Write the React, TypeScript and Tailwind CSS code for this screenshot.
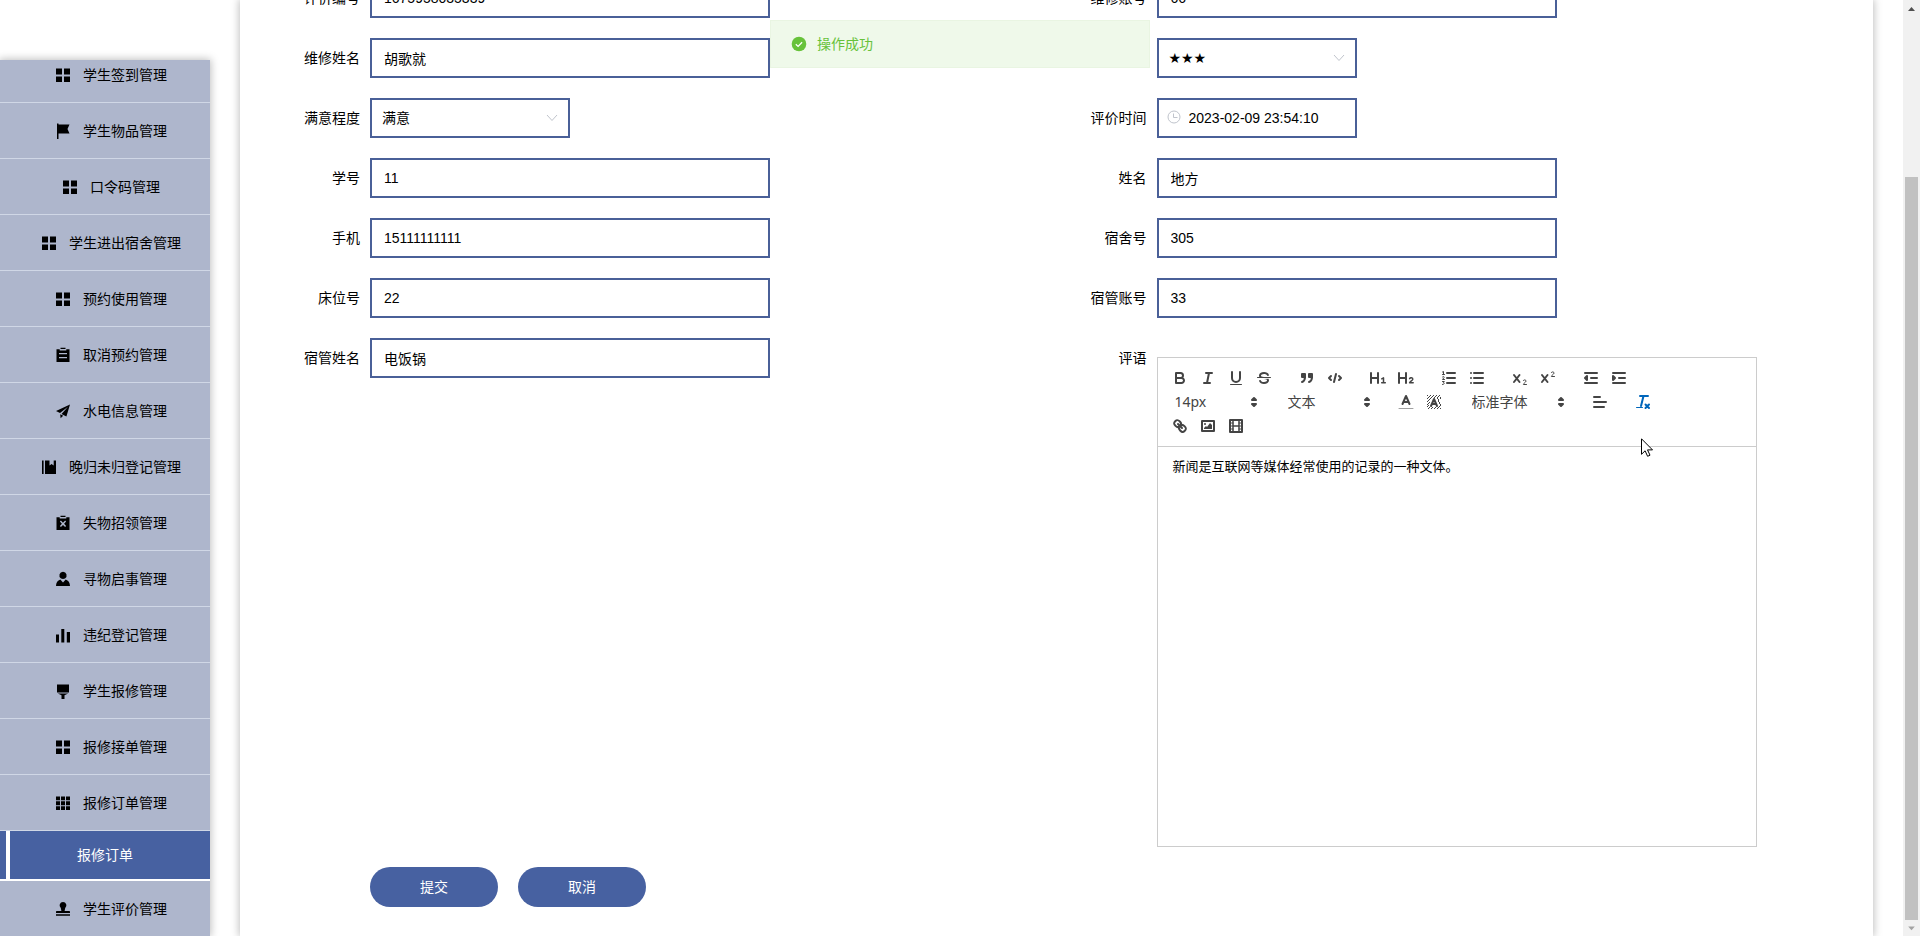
import type { ReactNode } from "react";
import { clsx } from "clsx";

const UI_FONT = "font-['Liberation_Sans','Noto_Sans_CJK_SC',sans-serif]";

const icons: Record<string, ReactNode> = {
  menu: <path d="M1 1.500h6v6H1zM9 1.500h6v6H9zM1 9.500h6v5.500H1zM9 9.500h6v5.500H9z" />,
  flag: <path d="M2 .5h1.500V16H2zM3.500 1.500H14.500L12.500 6l2 4.500h-11z" />,
  order: (
    <path
      fillRule="evenodd"
      d="M5.500.7h5v1.200h-5zM1.500 2.200h3.200v1.200h6.600V2.200h3.200V15h-13zM4 6v1.200h8V6zM4 10v1.200h8V10z"
    />
  ),
  promotion: <path d="M15 1.500 1 8l4 2 8-6.200L6.500 11l4.900 2.400zM5.200 11.300l3 1.500-2.600 2.500z" />,
  management: <path d="M1 1.500h1.600V15H1zM4 1.500h4.500v5L10.600 5l2.100 1.500v-5H15V15H4z" />,
  release: (
    <path
      fillRule="evenodd"
      d="M5.500.7h5v1.200h-5zM1.500 2.200h3.200v1.200h6.600V2.200h3.200V15h-13zM4.900 6.600l2 2.200-2 2.200 1 1L8 9.900l2.100 2.100 1-1-2-2.200 2-2.200-1-1L8 7.700 5.900 5.600z"
    />
  ),
  user: (
    <path d="M8 .8a3.600 3.600 0 0 1 2 6.600L8 8l-2-.6A3.600 3.600 0 0 1 8 .8zM5.300 8.400 8 11.500l2.700-3.100c2.600.8 4.300 3.200 4.300 6.600H1c0-3.400 1.700-5.800 4.300-6.600z" />
  ),
  data: <path d="M1 7.500h3v8H1zM6.300 2h3v13.500h-3zM11.800 5H15v10.500h-3.200z" />,
  platform: <path d="M2 1.500h12v8H2zM2.800 10.500h10.400l-3.700 1.700V16h-3v-3.800z" />,
  grid: (
    <path d="M1 1.500h4v3.800H1zM6 1.500h4v3.800H6zM11 1.500h4v3.800h-4zM1 6.300h4v4H1zM6 6.300h4v4H6zM11 6.300h4v4h-4zM1 11.300h4V15H1zM6 11.300h4V15H6zM11 11.300h4V15h-4z" />
  ),
  check: (
    <path d="M8 1a3.400 3.400 0 0 1 2.200 6L9.600 10H14c.7 0 1 .4 1 1v1H1v-1c0-.6.3-1 1-1h4.400l-.6-3A3.400 3.400 0 0 1 8 1zM1 13.200h14v1.500H1z" />
  ),
};

const menuTop = [
  { icon: "menu", label: "学生签到管理" },
  { icon: "flag", label: "学生物品管理" },
  { icon: "menu", label: "口令码管理" },
  { icon: "menu", label: "学生进出宿舍管理" },
  { icon: "menu", label: "预约使用管理" },
  { icon: "order", label: "取消预约管理" },
  { icon: "promotion", label: "水电信息管理" },
  { icon: "management", label: "晚归未归登记管理" },
  { icon: "release", label: "失物招领管理" },
  { icon: "user", label: "寻物启事管理" },
  { icon: "data", label: "违纪登记管理" },
  { icon: "platform", label: "学生报修管理" },
  { icon: "menu", label: "报修接单管理" },
  { icon: "grid", label: "报修订单管理" },
];

function MenuItem({ icon, label }: { icon: string; label: string }) {
  return (
    <a
      href="#"
      className="flex h-14 shrink-0 items-center justify-center border-b border-[#d0d7e6] text-sm text-black"
    >
      <svg viewBox="0 0 16 16" className="mx-3 h-4 w-4 fill-black">
        {icons[icon]}
      </svg>
      {label}
    </a>
  );
}

function Sidebar() {
  return (
    <aside className="mt-15 w-[210px] shrink-0 overflow-hidden bg-[#aeb6cc] shadow-[0_0_8px_1px_rgba(0,0,0,0.25)]">
      {/* menu is scrolled down a little */}
      <nav className="-mt-[13px] flex flex-col">
        {menuTop.map((item) => (
          <MenuItem key={item.label} {...item} />
        ))}
        <a
          href="#"
          className="flex h-[50px] shrink-0 border-b-2 border-white bg-[#4761a1] pl-1.5 text-sm text-white"
        >
          <span className="w-1 bg-white" />
          <span className="flex flex-1 items-center justify-center pr-2.5">报修订单</span>
        </a>
        <MenuItem icon="check" label="学生评价管理" />
      </nav>
    </aside>
  );
}

const boxClass = "h-10 border-2 border-[#4a6098] bg-white text-sm text-black outline-none";

function Row({ id, label, children }: { id: string; label: string; children: ReactNode }) {
  return (
    <div className="flex items-start">
      <label htmlFor={id} className="w-[100px] shrink-0 pr-2.5 text-right text-sm leading-10 text-black">
        {label}
      </label>
      {children}
    </div>
  );
}

function TextRow({ id, label, value }: { id: string; label: string; value: string }) {
  return (
    <Row id={id} label={label}>
      <input id={id} defaultValue={value} className={clsx(boxClass, "w-[400px] px-3")} />
    </Row>
  );
}

function SelectRow({ id, label, value, className }: { id: string; label: string; value: string; className?: string }) {
  return (
    <Row id={id} label={label}>
      <div className="relative">
        <select id={id} className={clsx(boxClass, "w-[200px] appearance-none px-2.5", className)}>
          <option>{value}</option>
        </select>
        <svg
          viewBox="0 0 12 8"
          className="pointer-events-none absolute top-4 right-3 h-2 w-3 fill-none stroke-[#c0c4cc]"
        >
          <path d="M1 1l5 5.500L11 1" />
        </svg>
      </div>
    </Row>
  );
}

/* ---- editor toolbar ---- */

const tools: Record<string, ReactNode> = {
  bold: (
    <path
      className="fill-none"
      d="M5 4h4.500A2.500 2.500 0 0 1 12 6.500 2.500 2.500 0 0 1 9.500 9H5zM5 9h5.500A2.500 2.500 0 0 1 13 11.500 2.500 2.500 0 0 1 10.500 14H5z"
    />
  ),
  italic: <path d="M7 4h6M5 14h6M8 14l2-10" />,
  underline: (
    <>
      <path className="fill-none" d="M5 3v6a4 4 0 0 0 8 0V3" />
      <rect className="fill-current stroke-none" x="3" y="15" width="12" height="1" rx=".5" />
    </>
  ),
  strike: (
    <>
      <path className="stroke-1" d="M15.500 8.500h-13" />
      <path
        className="fill-current stroke-none"
        d="M9.007 8C6.542 7.791 6 7.519 6 6.500 6 5.792 7.283 5 9 5c1.571 0 2.765.679 2.969 1.309a1 1 0 0 0 1.900-.617C13.356 4.106 11.354 3 9 3 6.200 3 4 4.538 4 6.500a3.200 3.200 0 0 0 .5 1.843zM8.984 10C11.457 10.208 12 10.479 12 11.500c0 .708-1.283 1.500-3 1.500-1.571 0-2.765-.679-2.969-1.309a1 1 0 1 0-1.900.617C4.644 13.894 6.646 15 9 15c2.800 0 5-1.538 5-3.500a3.200 3.200 0 0 0-.5-1.843z"
      />
    </>
  ),
  blockquote: (
    <>
      <path className="fill-current" d="M4 5h3v3H4zM11 5h3v3h-3z" />
      <path className="fill-none" d="M7 8c0 4.031-3 5-3 5M14 8c0 4.031-3 5-3 5" />
    </>
  ),
  code: <path className="fill-none" d="M5 7 3 9l2 2M13 7l2 2-2 2M10 5 8 13" />,
  header1: (
    <>
      <path className="fill-none" d="M2 4v10M9 4v10M2 9h7" />
      <path className="fill-none stroke-[1.500]" d="M12.700 9.800l1.800-1v5M12.700 13.800h3.600" />
    </>
  ),
  header2: (
    <>
      <path className="fill-none" d="M2 4v10M9 4v10M2 9h7" />
      <path className="fill-none stroke-[1.500]" d="M12.600 9.600c.6-1.200 3.300-1 3.200.6-.1 1.400-2.700 1.900-3.200 3.600h3.600" />
    </>
  ),
  ordered: (
    <>
      <path d="M7 4h8M7 9h8M7 14h8" />
      <path
        className="fill-none stroke-1"
        d="M2.500 5.500h2M3.500 5.500v-3L2.500 3M2.500 8c1-1 2-.3 1.500.6L2.500 10.500h2M2.500 12.500h1.800l-.9 1c1.300 0 1.300 2-.9 2"
      />
    </>
  ),
  bullet: <path d="M6 4h9M6 9h9M6 14h9M3 4h0M3 9h0M3 14h0" />,
  sub: (
    <>
      <path d="M3 6l5.500 7M8.500 6L3 13" />
      <path className="fill-none stroke-1" d="M12.300 11.600c.5-1.200 2.900-.9 2.700.6-.2 1.100-2.300 1.700-2.600 3.300h3.100" />
    </>
  ),
  sup: (
    <>
      <path d="M3 6l5.500 7M8.500 6L3 13" />
      <path className="fill-none stroke-1" d="M12.300 3.600c.5-1.200 2.900-.9 2.700.6-.2 1.100-2.300 1.700-2.600 3.300h3.100" />
    </>
  ),
  outdent: (
    <>
      <path d="M3 14h12M3 4h12M9 9h6" />
      <path className="fill-current" d="M5 7v4L3 9z" />
    </>
  ),
  indent: (
    <>
      <path d="M3 14h12M3 4h12M9 9h6" />
      <path className="fill-current" d="M3 7v4l2-2z" />
    </>
  ),
  color: (
    <>
      <path className="stroke-1 opacity-50" d="M2 15.500h14" />
      <path className="fill-none" d="M5.500 11 9 3l3.500 8M11.600 9H6.400" />
    </>
  ),
  background: (
    <>
      <path
        className="stroke-1 [stroke-dasharray:1_2] [stroke-linecap:butt]"
        d="M2 2.500h14M4 3.500h12M3 4.500h13M2 5.500h5M12 5.500h4M4 6.500h2M13 6.500h3M3 7.500h3M13 7.500h3M2 8.500h3M13 8.500h3M4 9.500h1M14 9.500h2M3 10.500h2M14 10.500h2M2 11.500h3M15 11.500h1M3 12.500h1M15 12.500h1M2 13.500h3M14 13.500h2M4 14.500h12M3 15.500h13"
      />
      <path className="fill-none" d="M6 13l3-7L12 13M11 11H7" />
    </>
  ),
  align: <path d="M3 9h12M3 14h10M3 4h6" />,
  clean: (
    <>
      <path d="M6 3h8M7 13 9.500 3M11.500 11.500l3.500 3.500M15 11.500l-3.500 3.500" />
      <rect className="fill-current stroke-none" x="2" y="14" width="7" height="1" rx=".5" />
    </>
  ),
  link: (
    <>
      <path d="M7 7l4 4" />
      <path
        className="fill-none"
        d="M8.900 4.577a3.476 3.476 0 0 1 .36 4.679A3.476 3.476 0 0 1 4.577 8.900C3.185 7.500 2.035 6.400 4.217 4.217S7.500 3.185 8.900 4.577zM13.423 9.100a3.476 3.476 0 0 0-4.679-.36 3.476 3.476 0 0 0 .36 4.679c1.392 1.392 2.500 2.542 4.679.36s1.031-3.279-.36-4.679z"
      />
    </>
  ),
  image: (
    <>
      <rect className="fill-none" x="3" y="4" width="12" height="10" />
      <circle className="fill-current stroke-none" cx="6" cy="7" r="1" />
      <path className="fill-current stroke-none" d="M5 12v-1l2-2 1 1 3-4 2 2v4z" />
    </>
  ),
  video: (
    <>
      <rect className="fill-none" x="3" y="3" width="12" height="12" />
      <path className="fill-none stroke-[1.500]" d="M6 3v12M12 3v12M6 9h6" />
      <path className="stroke-1" d="M3 6h3M3 9h3M3 12h3M12 6h3M12 9h3M12 12h3" />
    </>
  ),
};

function Tool({ name, active }: { name: string; active?: boolean }) {
  return (
    <button
      type="button"
      aria-label={name}
      className={clsx("h-6 w-7 px-[5px] py-[3px]", active ? "text-[#0066bb]" : "text-[#444]")}
    >
      <svg
        viewBox="0 0 18 18"
        className="h-[18px] w-[18px] stroke-current stroke-2 [stroke-linecap:round] [stroke-linejoin:round]"
      >
        {tools[name]}
      </svg>
    </button>
  );
}

function Picker({ label, value, className }: { label: string; value: string; className: string }) {
  return (
    <div className={clsx("relative mr-[15px] h-6 text-[#444]", className)}>
      <select
        aria-label={label}
        className="h-6 w-full appearance-none pl-[9px] font-['Noto_Sans','Noto_Sans_CJK_SC',sans-serif] text-sm leading-6 outline-none"
      >
        <option>{value}</option>
      </select>
      <svg
        viewBox="0 0 18 18"
        className="pointer-events-none absolute top-[3px] right-px h-[18px] w-[18px] fill-current stroke-current stroke-2 [stroke-linejoin:round]"
      >
        <path d="M7 11l2 2 2-2zM7 7l2-2 2 2z" />
      </svg>
    </div>
  );
}

function Group({ names }: { names: string[] }) {
  return (
    <span className="mr-[15px] flex">
      {names.map((name) => (
        <Tool key={name} name={name} active={name === "clean"} />
      ))}
    </span>
  );
}

function Editor() {
  return (
    <div className="mt-[19px] w-[600px] border border-[#ccc] bg-white">
      <div className="flex flex-wrap border-b border-[#ccc] p-2">
        <Group names={["bold", "italic", "underline", "strike"]} />
        <Group names={["blockquote", "code"]} />
        <Group names={["header1", "header2"]} />
        <Group names={["ordered", "bullet"]} />
        <Group names={["sub", "sup"]} />
        <Group names={["outdent", "indent"]} />
        <Picker label="字号" value="14px" className="w-[98px]" />
        <Picker label="标题" value="文本" className="w-[98px]" />
        <Group names={["color", "background"]} />
        <Picker label="字体" value="标准字体" className="w-[108px]" />
        <Group names={["align"]} />
        <Group names={["clean"]} />
        <Group names={["link", "image", "video"]} />
      </div>
      <textarea
        id="comment"
        defaultValue="新闻是互联网等媒体经常使用的记录的一种文体。"
        className="block h-[399px] w-full resize-none px-[15px] py-[11px] text-[13px] leading-[18px] text-black outline-none"
      />
    </div>
  );
}

function Toast() {
  return (
    <div
      role="alert"
      className="absolute top-5 left-1/2 flex h-12 w-[380px] -translate-x-1/2 items-center gap-2.5 border border-[#e9f5e2] bg-[#eff9ea] pl-5 text-sm text-[#67c23a]"
    >
      <svg viewBox="0 0 16 16" className="h-4 w-4">
        <circle cx="8" cy="8" r="7.300" fill="#67c23a" />
        <path d="M4.800 8.200l2.300 2.200 4-4.200" fill="none" stroke="#fff" strokeWidth="1.300" />
      </svg>
      操作成功
    </div>
  );
}

function Scrollbar() {
  return (
    <div className="flex w-[17px] shrink-0 flex-col items-center bg-[#f1f1f1]">
      <svg viewBox="0 0 17 17" className="h-[17px] w-[17px] shrink-0 fill-[#505050]">
        <path d="M5 11h7L8.500 7z" />
      </svg>
      <div className="mt-40 w-[13px] flex-1 bg-[#c1c1c1]" />
      <svg viewBox="0 0 17 17" className="h-4 w-[17px] shrink-0 fill-[#a3a3a3]">
        <path d="M5 7h7l-3.500 4z" />
      </svg>
    </div>
  );
}

export default function App() {
  return (
    <div className={clsx("relative flex h-screen overflow-hidden bg-white", UI_FONT)}>
      <Sidebar />
      <main className="mx-[30px] flex-1 bg-white px-[30px] shadow-[0_0_8px_1px_rgba(0,0,0,0.25)]">
        {/* page is scrolled, the first row is cut by the window */}
        <form className="-mt-[22px]" onSubmit={(e) => e.preventDefault()}>
          <div className="grid grid-cols-2 gap-y-5">
            <TextRow id="no" label="评价编号" value="1675958035339" />
            <TextRow id="repairAccount" label="维修账号" value="66" />
            <TextRow id="repairName" label="维修姓名" value="胡歌就" />
            <SelectRow id="rating" label="评分" value="★★★" className="font-['DejaVu_Sans',sans-serif]" />
            <SelectRow id="satisfaction" label="满意程度" value="满意" />
            <Row id="time" label="评价时间">
              <div className="relative">
                <input
                  id="time"
                  defaultValue="2023-02-09 23:54:10"
                  className={clsx(boxClass, "w-[200px] pr-2 pl-[30px]")}
                />
                <svg
                  viewBox="0 0 14 14"
                  className="pointer-events-none absolute top-3 left-2.5 h-3.5 w-3.5 fill-none stroke-[#c0c4cc]"
                >
                  <circle cx="7" cy="7" r="6" />
                  <path d="M6.500 3.500v4h4" />
                </svg>
              </div>
            </Row>
            <TextRow id="studentNo" label="学号" value="11" />
            <TextRow id="name" label="姓名" value="地方" />
            <TextRow id="phone" label="手机" value="15111111111" />
            <TextRow id="dorm" label="宿舍号" value="305" />
            <TextRow id="bed" label="床位号" value="22" />
            <TextRow id="managerAccount" label="宿管账号" value="33" />
            <TextRow id="managerName" label="宿管姓名" value="电饭锅" />
            <Row id="comment" label="评语">
              <Editor />
            </Row>
          </div>
          <div className="mt-5 ml-[100px] flex gap-5">
            <button type="submit" className="h-10 w-32 rounded-full bg-[#4761a1] text-sm text-white">
              提交
            </button>
            <button type="button" className="h-10 w-32 rounded-full bg-[#4761a1] text-sm text-white">
              取消
            </button>
          </div>
        </form>
      </main>
      <Scrollbar />
      <Toast />
      {/* mouse pointer */}
      <svg viewBox="0 0 12 19" className="absolute top-[438px] left-[1641px] h-[19px] w-3">
        <path d="M.5.8v15.500l3.600-3.500 2.500 5.500 2.400-1.100-2.500-5.300h5z" fill="#fff" stroke="#000" />
      </svg>
    </div>
  );
}
